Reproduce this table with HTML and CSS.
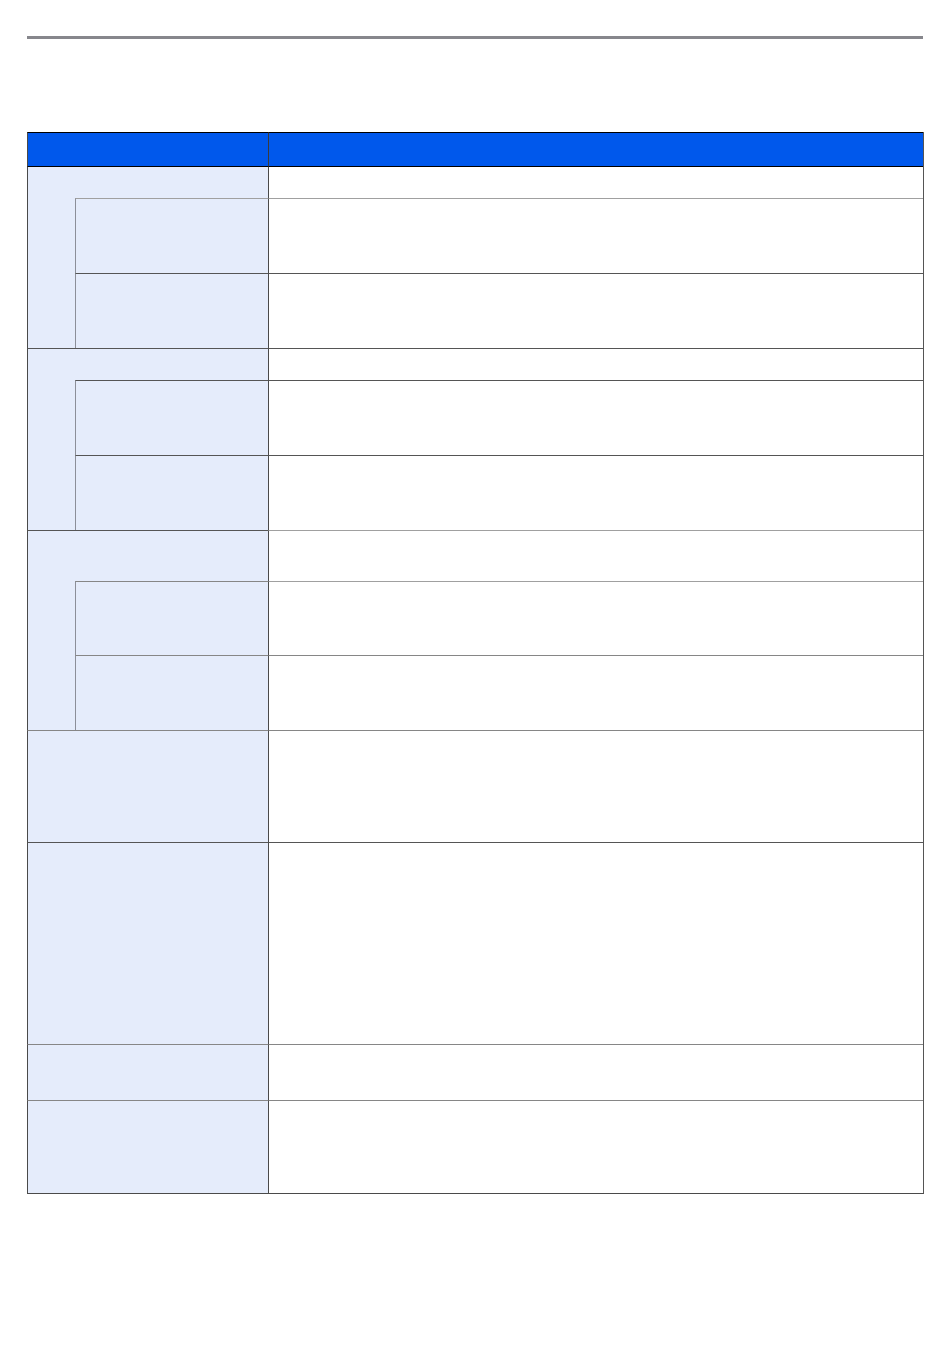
FILE: index.html
```html
<!DOCTYPE html>
<html lang="en">

<head>
  <meta charset="UTF-8">
  <meta name="viewport" content="width=device-width, initial-scale=1.0">
  <title>Settings Table</title>
  <link rel="stylesheet" href="styles.css">
</head>

<body>
  <div class="page">
    <hr class="top-rule">

    <table class="spec">
      <colgroup>
        <col class="c-indent">
        <col class="c-name">
        <col class="c-desc">
      </colgroup>
      <thead>
        <tr>
          <th colspan="2"></th>
          <th class="th-desc"></th>
        </tr>
      </thead>
      <tbody>
        <!-- group 1 -->
        <tr class="h-31">
          <td class="name grp" rowspan="3"></td>
          <td class="name grp-head"></td>
          <td class="desc"></td>
        </tr>
        <tr class="h-75">
          <td class="name sub lt"></td>
          <td class="desc lt"></td>
        </tr>
        <tr class="h-75">
          <td class="name sub"></td>
          <td class="desc"></td>
        </tr>

        <!-- group 2 -->
        <tr class="h-32">
          <td class="name grp" rowspan="3"></td>
          <td class="name grp-head"></td>
          <td class="desc"></td>
        </tr>
        <tr class="h-75">
          <td class="name sub"></td>
          <td class="desc"></td>
        </tr>
        <tr class="h-75">
          <td class="name sub"></td>
          <td class="desc"></td>
        </tr>

        <!-- group 3 -->
        <tr class="h-51">
          <td class="name grp" rowspan="3"></td>
          <td class="name grp-head"></td>
          <td class="desc lt"></td>
        </tr>
        <tr class="h-74">
          <td class="name sub md"></td>
          <td class="desc lt"></td>
        </tr>
        <tr class="h-75">
          <td class="name sub md"></td>
          <td class="desc md"></td>
        </tr>

        <!-- single rows -->
        <tr class="h-112">
          <td class="name md" colspan="2"></td>
          <td class="desc md"></td>
        </tr>
        <tr class="h-202">
          <td class="name" colspan="2"></td>
          <td class="desc"></td>
        </tr>
        <tr class="h-56">
          <td class="name md" colspan="2"></td>
          <td class="desc md"></td>
        </tr>
        <tr class="h-93">
          <td class="name md" colspan="2"></td>
          <td class="desc md"></td>
        </tr>
      </tbody>
    </table>
  </div>
</body>

</html>
```

FILE: styles.css
```css
body {
  margin: 0;
  font-family: "Liberation Sans", Arial, sans-serif;
  background: #fff;
}

.page {
  padding: 0 27px;
}

.top-rule {
  margin: 36px 0 0;
  height: 3px;
  border: none;
  background: #87878c;
}

.spec {
  margin-top: 93px;
  width: 897px;
  table-layout: fixed;
  border-collapse: separate;
  border-spacing: 0;
  border-right: 1px solid #555;
  border-bottom: 1px solid #4a4a4a;
}

.c-indent {
  width: 48px;
}

.c-name {
  width: 193px;
}

.spec th,
.spec td {
  box-sizing: border-box;
  padding: 0;
  border-top: 1px solid #555;
  border-left: 1px solid #4a4a4a;
}

.spec thead tr {
  height: 35px;
}

.spec th {
  background: #0058ec;
  border-top: 1px solid #000;
  border-bottom: 1px solid #000;
}

.spec th.th-desc {
  border-left: 1px solid #3a3a3a;
}

.spec tbody tr:first-child td {
  border-top: 0;
}

.name {
  background: #e5ecfb;
}

.desc {
  background: #fff;
}

.spec td.grp-head {
  border-left: 0;
}

.spec td.sub {
  border-left: 1px solid #8c8f99;
}

.spec td.lt {
  border-top-color: #a0a0a0;
}

.spec td.md {
  border-top-color: #868686;
}

.h-31 { height: 31px; }
.h-32 { height: 32px; }
.h-51 { height: 51px; }
.h-56 { height: 56px; }
.h-74 { height: 74px; }
.h-75 { height: 75px; }
.h-93 { height: 93px; }
.h-112 { height: 112px; }
.h-202 { height: 202px; }
```
